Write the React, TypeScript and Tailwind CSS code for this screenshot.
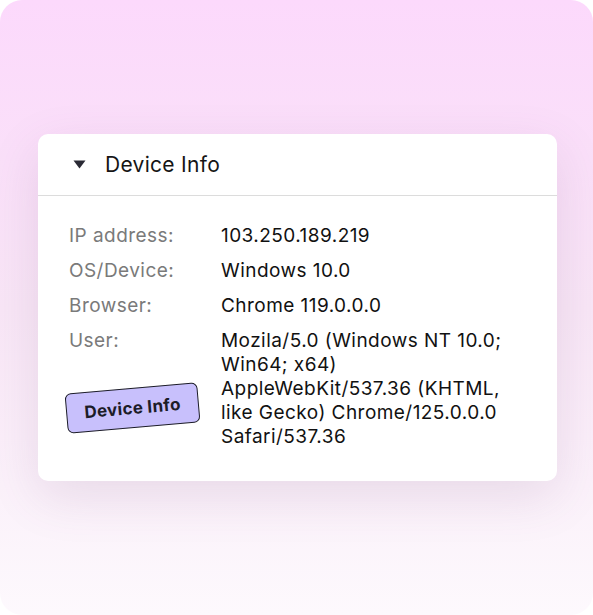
export default function App() {
  const rows = [
    { label: "IP address:", value: "103.250.189.219" },
    { label: "OS/Device:", value: "Windows 10.0" },
    { label: "Browser:", value: "Chrome 119.0.0.0" },
  ];
  return (
    <div className="w-[593px] h-[615px] bg-white" style={{ fontFamily: "Inter, 'Open Sans', sans-serif" }}>
      <div className="w-full h-full rounded-[22px] bg-gradient-to-b from-[#fcd9fc] via-[#f8e6f6] to-[#fdf9fd] pt-[134px] px-[38px]">
        <div className="w-[519px] h-[347px] bg-white rounded-[10px] shadow-[0_16px_50px_rgba(120,80,130,0.14)]">
          <div className="h-[62px] flex items-center pl-[35px] border-b border-[#dcdcdc]">
            <svg width="13" height="9" viewBox="0 0 13 9" className="mr-[19px]">
              <path d="M0.5 0.5 H12.5 L6.5 8.5 Z" fill="#2a2a35" />
            </svg>
            <span className="text-[21px] tracking-[0.3px] text-[#151515]">Device Info</span>
          </div>
          <div className="pl-[31px] pt-[28px] text-[19px] leading-[24px] tracking-[0.45px]">
            {rows.map((r) => (
              <div key={r.label} className="flex mb-[11px]">
                <div className="w-[152px] text-[#7a7a7a]">{r.label}</div>
                <div className="text-[#111]">{r.value}</div>
              </div>
            ))}
            <div className="flex">
              <div className="w-[152px] text-[#7a7a7a] relative">
                User:
                <div className="absolute left-[-3px] top-[59px] w-[133px] h-[40px] rounded-[6px] border-[1.5px] border-[#1c1c28] bg-[#c8c0fc] flex items-center justify-center -rotate-[5deg] text-[17px] tracking-[0.3px] font-bold text-[#1c1c28]">
                  Device Info
                </div>
              </div>
              <div className="text-[#111] whitespace-nowrap">
                Mozila/5.0 (Windows NT 10.0;
                <br />
                Win64; x64)
                <br />
                AppleWebKit/537.36 (KHTML,
                <br />
                like Gecko) Chrome/125.0.0.0
                <br />
                Safari/537.36
              </div>
            </div>
          </div>
        </div>
      </div>
    </div>
  );
}
